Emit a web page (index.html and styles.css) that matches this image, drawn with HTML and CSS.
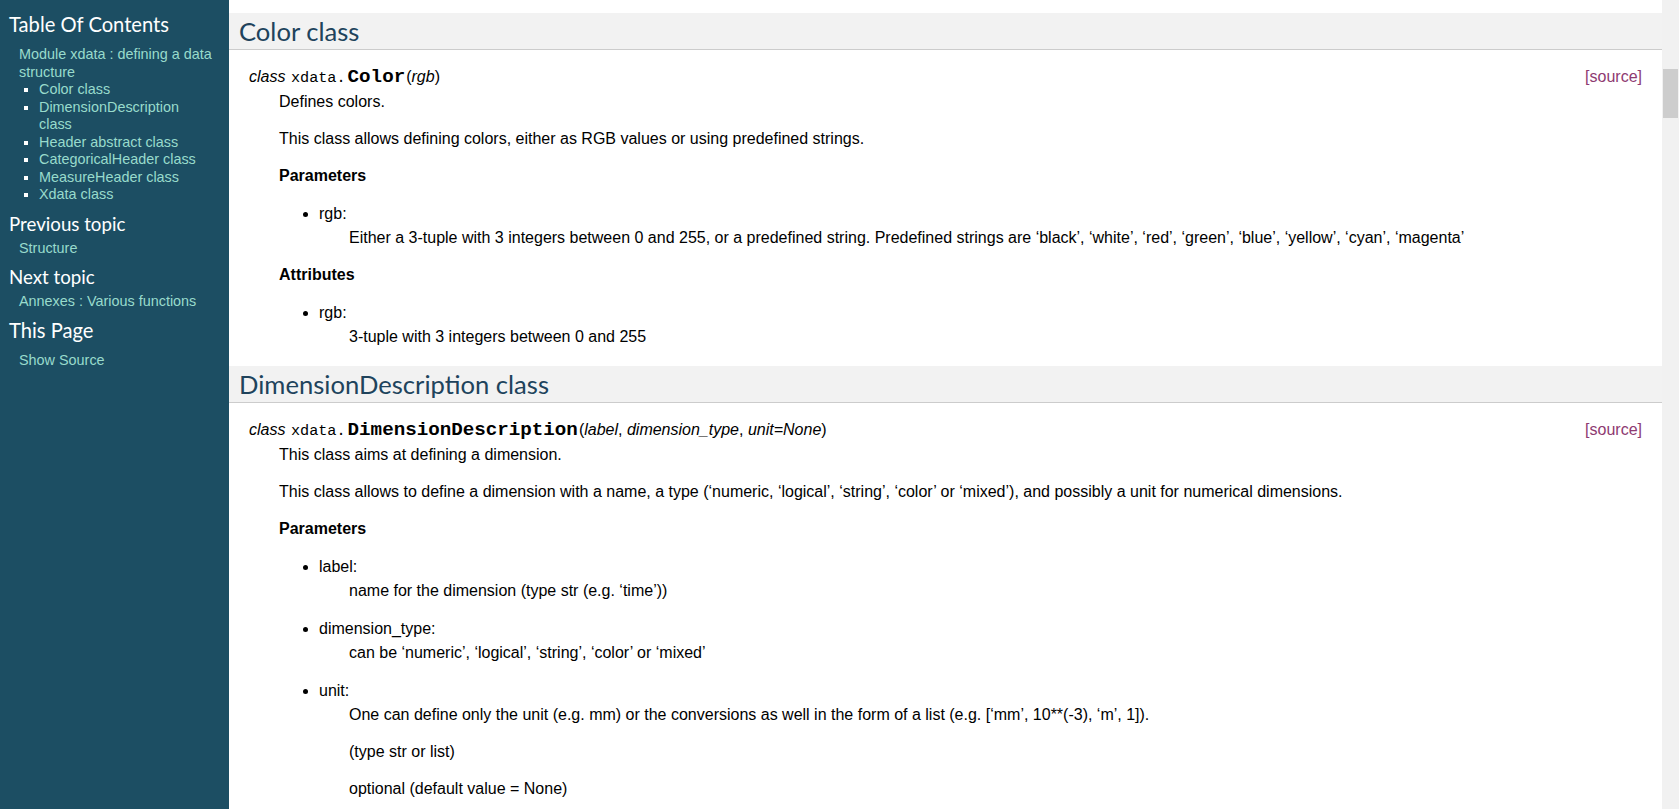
FILE: index.html
```html
<!DOCTYPE html>
<html lang="en">
<head>
<meta charset="utf-8">
<title>Module xdata : defining a data structure</title>
<link rel="stylesheet" href="styles.css">
</head>
<body>
<div class="page">
  <aside class="sidebar">
    <h3>Table Of Contents</h3>
    <ul class="toc">
      <li><a href="#">Module xdata : defining a data structure</a>
        <ul>
          <li><a href="#">Color class</a></li>
          <li><a href="#">DimensionDescription class</a></li>
          <li><a href="#">Header abstract class</a></li>
          <li><a href="#">CategoricalHeader class</a></li>
          <li><a href="#">MeasureHeader class</a></li>
          <li><a href="#">Xdata class</a></li>
        </ul>
      </li>
    </ul>
    <h4>Previous topic</h4>
    <p class="topless"><a href="#">Structure</a></p>
    <h4>Next topic</h4>
    <p class="topless last"><a href="#">Annexes : Various functions</a></p>
    <h3>This Page</h3>
    <ul class="menu">
      <li><a href="#">Show Source</a></li>
    </ul>
  </aside>

  <main class="body">
    <section class="section">
      <h2>Color class</h2>
      <dl class="cls">
        <dt class="sig"><a class="viewcode" href="#">[source]</a><em class="property">class </em><code class="classname">xdata.</code><code class="name">Color</code><span class="paren">(</span><em>rgb</em><span class="paren">)</span></dt>
        <dd>
          <p>Defines colors.</p>
          <p>This class allows defining colors, either as RGB values or using predefined strings.</p>
          <p><strong>Parameters</strong></p>
          <ul class="params">
            <li>
              <dl class="item">
                <dt>rgb:</dt>
                <dd>Either a 3-tuple with 3 integers between 0 and 255, or a predefined string. Predefined strings are ‘black’, ‘white’, ‘red’, ‘green’, ‘blue’, ‘yellow’, ‘cyan’, ‘magenta’</dd>
              </dl>
            </li>
          </ul>
          <p><strong>Attributes</strong></p>
          <ul class="params">
            <li>
              <dl class="item">
                <dt>rgb:</dt>
                <dd>3-tuple with 3 integers between 0 and 255</dd>
              </dl>
            </li>
          </ul>
        </dd>
      </dl>
    </section>

    <section class="section">
      <h2>DimensionDescription class</h2>
      <dl class="cls">
        <dt class="sig"><a class="viewcode" href="#">[source]</a><em class="property">class </em><code class="classname">xdata.</code><code class="name">DimensionDescription</code><span class="paren">(</span><em>label</em>, <em>dimension_type</em>, <em>unit=None</em><span class="paren">)</span></dt>
        <dd>
          <p>This class aims at defining a dimension.</p>
          <p>This class allows to define a dimension with a name, a type (‘numeric, ‘logical’, ‘string’, ‘color’ or ‘mixed’), and possibly a unit for numerical dimensions.</p>
          <p><strong>Parameters</strong></p>
          <ul class="params">
            <li>
              <dl class="item">
                <dt>label:</dt>
                <dd>name for the dimension (type str (e.g. ‘time’))</dd>
              </dl>
            </li>
            <li>
              <dl class="item">
                <dt>dimension_type:</dt>
                <dd>can be ‘numeric’, ‘logical’, ‘string’, ‘color’ or ‘mixed’</dd>
              </dl>
            </li>
            <li>
              <dl class="item">
                <dt>unit:</dt>
                <dd>
                  <p>One can define only the unit (e.g. mm) or the conversions as well in the form of a list (e.g. [‘mm’, 10**(-3), ‘m’, 1]).</p>
                  <p>(type str or list)</p>
                  <p>optional (default value = None)</p>
                </dd>
              </dl>
            </li>
          </ul>
        </dd>
      </dl>
    </section>
  </main>

  <div class="scrollbar"><div class="thumb"></div></div>
</div>
</body>
</html>
```

FILE: styles.css
```css
html, body {
  margin: 0;
  padding: 0;
  height: 100%;
  overflow: hidden;
}

body {
  font-family: "Liberation Sans", Arial, sans-serif;
  font-size: 16px;
  color: #000;
  background: #fff;
}

.page {
  display: flex;
  height: 809px;
}

/* ---------- sidebar ---------- */
.sidebar {
  flex: none;
  width: 229px;
  box-sizing: border-box;
  background: #1c4e63;
  padding: 12px 5px 0 9px;
  font-size: 14.4px;
  line-height: 17.5px;
  color: #fff;
}

.sidebar h3,
.sidebar h4 {
  font-family: Lato, "DejaVu Sans", sans-serif;
  font-weight: normal;
  color: #fff;
  margin: 0;
  padding: 0;
}

.sidebar h3 {
  font-size: 20.16px;
  line-height: 24px;
}

.sidebar h4 {
  font-size: 18.72px;
  line-height: 21px;
  margin-top: 5px;
}

.sidebar ul {
  list-style: none;
  margin: 10px;
  padding: 0;
}

.sidebar ul ul {
  margin: 0 0 0 20px;
  list-style: square;
}

.sidebar a {
  color: #98dbcc;
  text-decoration: none;
}

.sidebar .topless {
  margin: 5px 10px 10px;
}

.sidebar .topless.last {
  margin-bottom: 7px;
}

/* ---------- main body ---------- */
.body {
  flex: 1;
  min-width: 0;
  padding: 13px 20px 0;
  overflow: hidden;
}

.body h2 {
  font-family: Lato, "DejaVu Sans", sans-serif;
  font-weight: normal;
  font-size: 25.6px;
  line-height: 30px;
  color: #20435c;
  background: #f2f2f2;
  border-bottom: 1px solid #ccc;
  margin: 19px -20px 15px;
  padding: 3px 0 3px 10px;
}

.body .section:first-child h2 {
  margin-top: 0;
}

.cls {
  margin: 0;
}

.sig {
  line-height: 23px;
  margin: 0;
}

.sig .property {
  font-style: italic;
}

.sig code {
  font-family: "Liberation Mono", "Courier New", monospace;
  padding: 0 1px;
}

.sig .classname {
  font-size: 15.2px;
}

.sig .name {
  font-size: 19.2px;
  font-weight: bold;
}

.viewcode {
  float: right;
  color: #8e3a71;
  text-decoration: none;
}

.cls > dd {
  margin: 1px 0 10px 30px;
  line-height: 21px;
}

.cls p {
  margin: 16px 0;
  line-height: 21px;
}

.cls > dd > p:first-child {
  margin-top: 0;
}

.params {
  margin: 17px 0 15px;
  padding-left: 40px;
  line-height: 21px;
}

.params li + li {
  margin-top: 17px;
}

.item {
  margin: 0;
}

.item dt {
  line-height: 21px;
}

.item dd {
  margin: 3px 0 0 30px;
  line-height: 21px;
}

.item dd > p:first-child {
  margin-top: 0;
}

.item dd > p:last-child {
  margin-bottom: 0;
}

/* ---------- scrollbar ---------- */
.scrollbar {
  flex: none;
  width: 17px;
  background: #f1f1f1;
  padding-top: 69px;
  box-sizing: border-box;
}

.thumb {
  width: 15px;
  height: 49px;
  margin-left: 1px;
  background: #cdcdcd;
}
```
